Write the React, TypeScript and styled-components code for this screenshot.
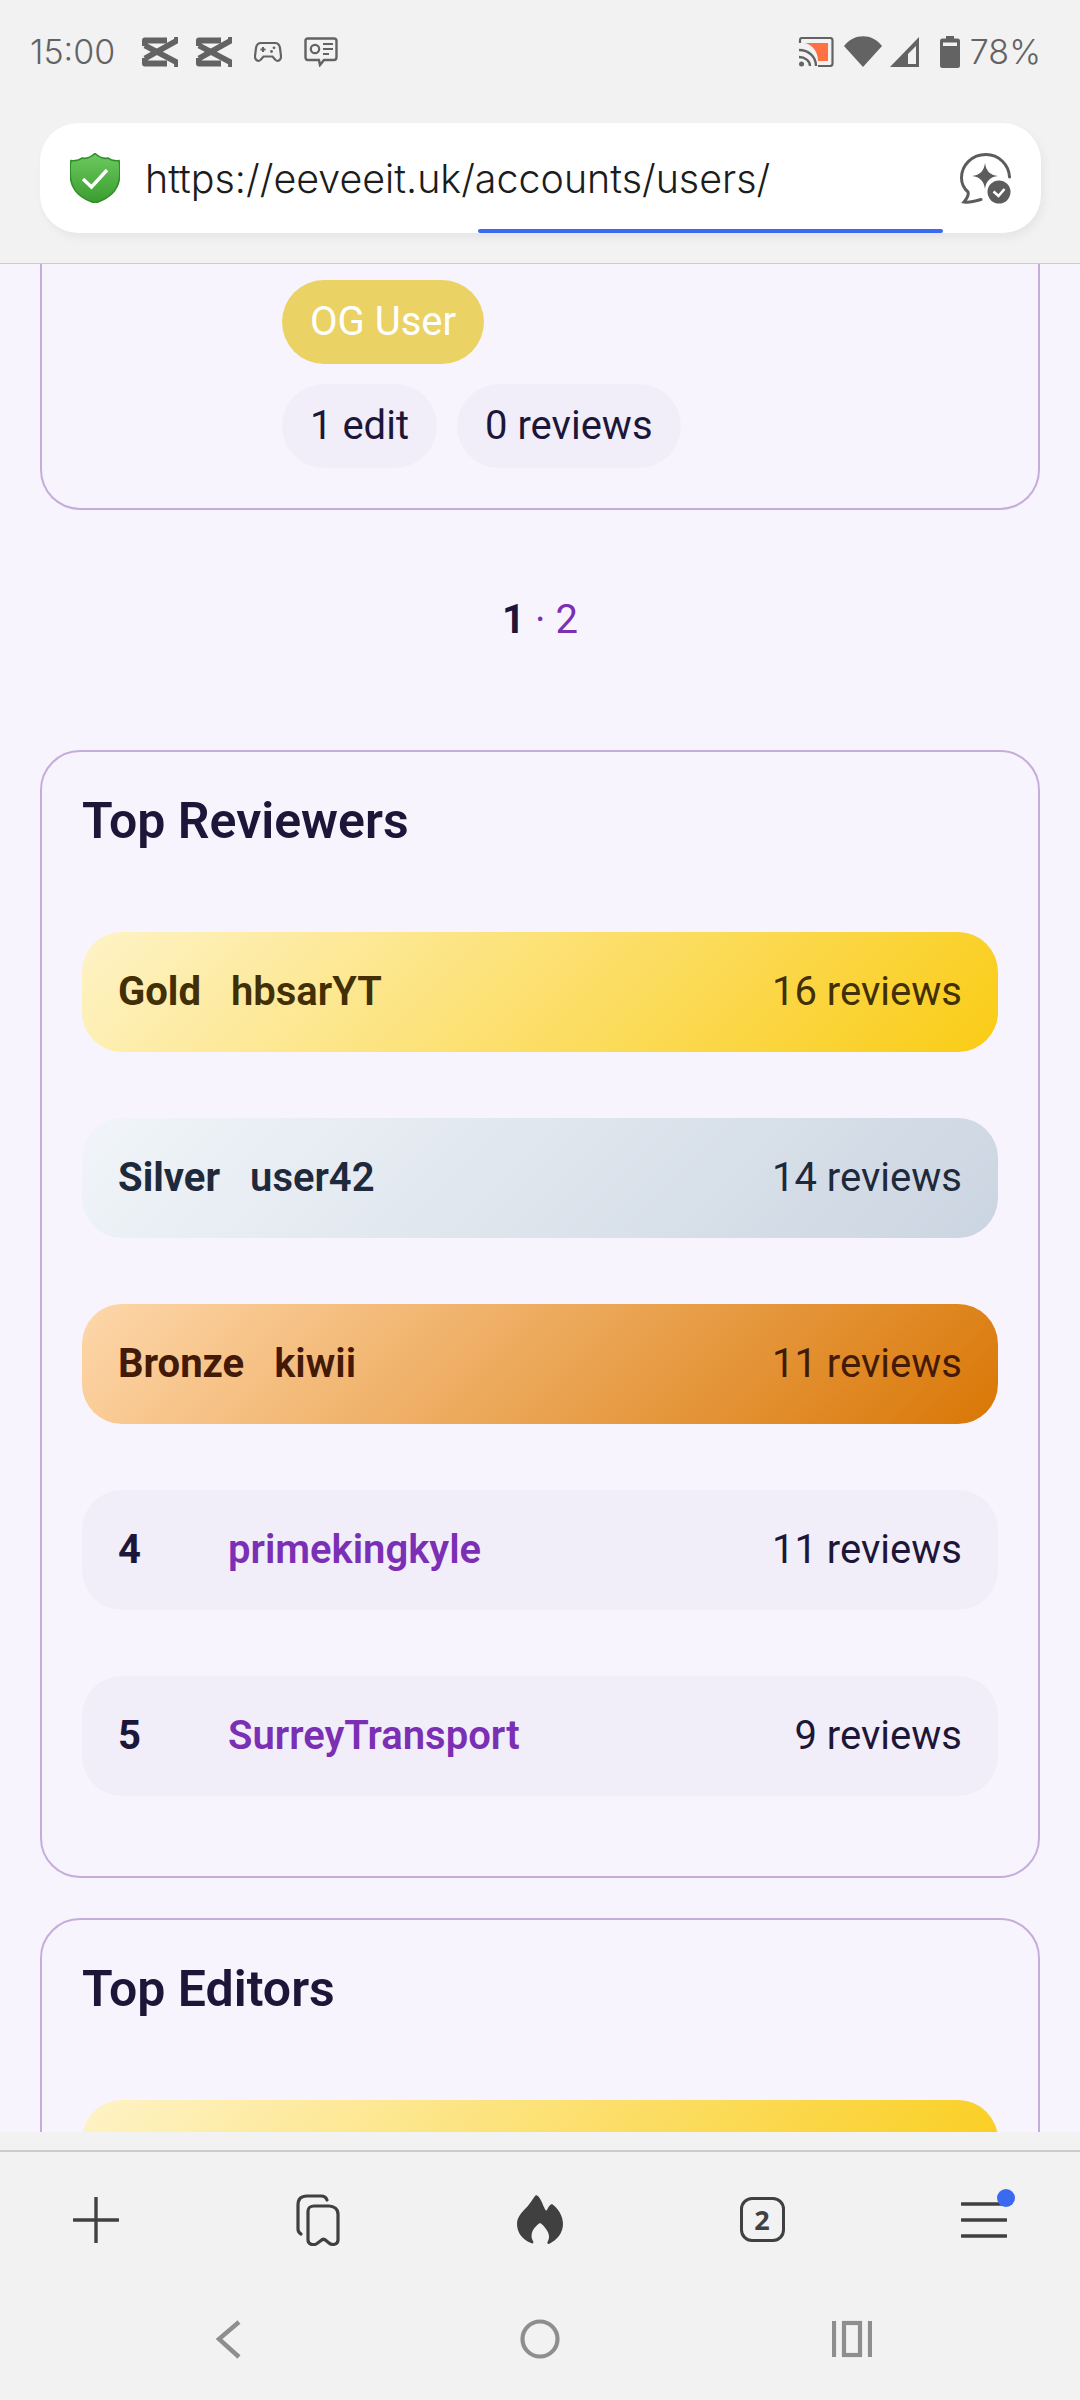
import React from 'react';
import styled, { createGlobalStyle } from 'styled-components';

const GlobalStyle = createGlobalStyle`
  html, body {
    margin: 0;
    padding: 0;
    background: #f2f2f2;
  }
  * {
    box-sizing: border-box;
  }
`;

type Tier = 'gold' | 'silver' | 'bronze' | 'plain';

const reviewers: { tier: Tier; label: string; name: string; count: string }[] = [
  { tier: 'gold', label: 'Gold', name: 'hbsarYT', count: '16 reviews' },
  { tier: 'silver', label: 'Silver', name: 'user42', count: '14 reviews' },
  { tier: 'bronze', label: 'Bronze', name: 'kiwii', count: '11 reviews' },
  { tier: 'plain', label: '4', name: 'primekingkyle', count: '11 reviews' },
  { tier: 'plain', label: '5', name: 'SurreyTransport', count: '9 reviews' },
];

const tierBackground: Record<Tier, string> = {
  gold: 'linear-gradient(135deg, #fef3c7, #facc15)',
  silver: 'linear-gradient(135deg, #f1f5f9, #cbd5e1)',
  bronze: 'linear-gradient(135deg, #fed7aa, #d97706)',
  plain: '#f1eef9',
};

const tierColor: Record<Tier, string> = {
  gold: '#422f06',
  silver: '#1e293b',
  bronze: '#431a07',
  plain: '#1e1638',
};

function CapcutIcon() {
  return (
    <svg width="36" height="30" viewBox="0 0 36 30" fill="none" stroke="#636363" strokeWidth="5.8" strokeLinejoin="round">
      <path d="M2.900 9 V3.500 H25" />
      <path d="M2.900 21 V26.500 H25" />
      <path d="M2.900 8.500 L35 25.500 V30" />
      <path d="M2.900 21.500 L35 3.500 V0" />
    </svg>
  );
}

function StatusLeftIcons() {
  return (
    <LeftIcons>
      <CapcutIcon />
      <CapcutIcon />
      <GameSlot>
        <svg width="28" height="22" viewBox="0 0 28 22" fill="none">
          <path
            d="M7 2 H21 C24 2 25.500 4 26 7 L27 15 C27.300 19 24 21 21.500 19 L18.500 15.500 H9.500 L6.500 19 C4 21 0.700 19 1 15 L2 7 C2.500 4 4 2 7 2 Z"
            stroke="#636363"
            strokeWidth="2.200"
          />
          <path d="M6.500 8.500 H11.500 M9 6 V11" stroke="#636363" strokeWidth="2" />
          <circle cx="20" cy="6.800" r="1.400" fill="#636363" />
          <circle cx="17.500" cy="10.500" r="1.400" fill="#636363" />
        </svg>
      </GameSlot>
      <MessageSlot>
        <svg width="34" height="30" viewBox="0 0 34 30" fill="none">
          <path
            d="M4 1.500 H30 Q32.500 1.500 32.500 4 V20 Q32.500 23 30 23 H20 L16 28 L15 23 H4 Q1.500 23 1.500 20 V4 Q1.500 1.500 4 1.500 Z"
            stroke="#636363"
            strokeWidth="2.400"
          />
          <circle cx="11" cy="12" r="4.200" stroke="#636363" strokeWidth="2.200" />
          <path d="M19 7 H29 M19 12 H29 M19 17 H25" stroke="#636363" strokeWidth="2.200" />
        </svg>
      </MessageSlot>
    </LeftIcons>
  );
}

function StatusRightIcons() {
  return (
    <RightIcons>
      <svg width="36" height="30" viewBox="0 0 36 30" fill="none">
        <path d="M2 6 V3 Q2 1 4 1 H32 Q34.500 1 34.500 3.500 V26.500 Q34.500 29 32 29 H20" stroke="#636363" strokeWidth="2.200" />
        <path d="M7 6 H30 V24 H20 C20 15 15 8 7 6 Z" fill="#ff7043" />
        <path d="M1 13 C11 13 18 20 18 29 M1 20 C7 20 12 24 12 29" stroke="#636363" strokeWidth="2.400" />
        <circle cx="3.500" cy="27" r="2.500" fill="#636363" />
      </svg>
      <svg width="38" height="31" viewBox="0 0 38 31">
        <path d="M0 10 C10 -3 28 -3 38 10 L19 31 Z" fill="#636363" />
      </svg>
      <SignalSlot>
        <svg width="30" height="30" viewBox="0 0 30 30">
          <path d="M29 0 V30 H0 Z M26 9 L18 17 V27 H26 Z" fill="#636363" fillRule="evenodd" />
        </svg>
      </SignalSlot>
      <BatterySlot>
        <svg width="20" height="32" viewBox="0 0 20 32">
          <path
            d="M6 0 H14 V2.500 H17.500 Q20 2.500 20 5 V29.500 Q20 32 17.500 32 H2.500 Q0 32 0 29.500 V5 Q0 2.500 2.500 2.500 H6 Z M3 6.500 V10 H17 V6.500 Z"
            fill="#636363"
            fillRule="evenodd"
          />
        </svg>
      </BatterySlot>
    </RightIcons>
  );
}

function ShieldIcon() {
  return (
    <svg width="50" height="50" viewBox="0 0 50 50">
      <defs>
        <linearGradient id="shieldFill" x1="0" y1="0" x2="0" y2="1">
          <stop offset="0" stopColor="#6cc95f" />
          <stop offset="1" stopColor="#3a9c2f" />
        </linearGradient>
      </defs>
      <path
        d="M25 0.500 C29 4 33 6.500 38 5 C41 7.500 45 8 49 7.500 C50 10 50 20 49.500 25 C48 38 38 46 25 50 C12 46 2 38 0.500 25 C0 20 0 10 1 7.500 C5 8 9 7.500 12 5 C17 6.500 21 4 25 0.500 Z"
        fill="url(#shieldFill)"
        stroke="#2f8f27"
        strokeWidth="1.600"
      />
      <path d="M13 26 L21.500 34 L37 17" fill="none" stroke="#fff" strokeWidth="3.400" />
    </svg>
  );
}

function AssistantIcon() {
  return (
    <svg width="51" height="51" viewBox="0 0 51 51" fill="none">
      <path
        d="M49.500 24 C49 12 39 1.500 26 1.500 C12 1.500 1.500 12 1.500 25 C1.500 31 4 35.500 8 39 C9 42 6.500 46 4 49 C10 50 16 48 21 46.500"
        stroke="#5c5c5c"
        strokeWidth="3"
        strokeLinecap="round"
      />
      <path
        d="M25 10 C26 18 30 22 38 23 C30 24 26 28 25 36 C24 28 20 24 12 23 C20 22 24 18 25 10 Z"
        fill="#5c5c5c"
      />
      <circle cx="39" cy="39" r="11.500" fill="#5c5c5c" />
      <path d="M33.500 38.500 L38.500 43 L44.500 36" stroke="#fff" strokeWidth="2.600" />
    </svg>
  );
}

function ReviewRow({ tier, label, name, count }: { tier: Tier; label: string; name: string; count: string }) {
  const plain = tier === 'plain';
  return (
    <Row $tier={tier}>
      <RowLabel>{label}</RowLabel>
      {plain ? <RowLink>{name}</RowLink> : <RowName>{name}</RowName>}
      <RowCount>{count}</RowCount>
    </Row>
  );
}

function App() {
  return (
    <Screen>
      <GlobalStyle />
      <TopChrome>
        <StatusBar>
          <StatusGroup>
            <StatusText>15:00</StatusText>
            <StatusLeftIcons />
          </StatusGroup>
          <StatusGroup>
            <StatusRightIcons />
            <StatusText>78%</StatusText>
          </StatusGroup>
        </StatusBar>
        <UrlBar>
          <ShieldIcon />
          <UrlText>https://eeveeit.uk/accounts/users/</UrlText>
          <AssistantIcon />
          <LoadBar />
        </UrlBar>
      </TopChrome>

      <Content>
        <ClippedCard>
          <OgPill>OG User</OgPill>
          <PillRow>
            <StatPill>1 edit</StatPill>
            <StatPill>0 reviews</StatPill>
          </PillRow>
        </ClippedCard>

        <Pagination>
          <CurrentPage>1</CurrentPage>
          <PageDot>·</PageDot>
          <PageLink>2</PageLink>
        </Pagination>

        <Card>
          <CardTitle>Top Reviewers</CardTitle>
          <RowList>
            {reviewers.map((r) => (
              <ReviewRow key={r.name} {...r} />
            ))}
          </RowList>
        </Card>

        <NextCard>
          <CardTitle>Top Editors</CardTitle>
          <RowList>
            <Row $tier="gold" />
          </RowList>
        </NextCard>
      </Content>

      <BottomChrome>
        <Toolbar>
          <ToolButton>
            <svg width="46" height="46" viewBox="0 0 46 46" fill="none">
              <path d="M1 23 H45 M23 1 V45" stroke="#404040" strokeWidth="3.400" strokeLinecap="round" />
            </svg>
          </ToolButton>
          <ToolButton>
            <svg width="44" height="52" viewBox="0 0 44 52" fill="none" stroke="#404040" strokeWidth="3.200" strokeLinecap="round" strokeLinejoin="round">
              <path d="M31 6 C30 3 28 2 25 2 H11 C5 2 2 5 2 11 V35 C2 38 3 39 5 40" />
              <path d="M12 17 C12 14 15 12 18 12 H33 C38 12 42 15 42 20 V46 C42 51 36 51.500 33 49 L30 46.500 C28.500 45 26.500 45 25 46.500 L21 49.500 C18 51.500 12 51 12 46 Z" />
            </svg>
          </ToolButton>
          <ToolButton>
            <svg width="46" height="50" viewBox="0 0 46 50">
              <path
                d="M19 0 C23 1 25 8 27 12 C28 15 29 16 30 15 C31 13 32 10 35 9 C41 13 46 21 46 29 C46 38 40 45 32 49 C30 49 30 47 31 46 C33 42 32 38 29 34 C27 31 25 29 23 28 C21 29 18 32 16 35 C14 39 14 43 16 46 C17 48 16 49 14 48 C6 45 0 38 0 29 C0 22 5 17 9 13 C13 9 16 3 19 0 Z"
                fill="#404040"
              />
            </svg>
          </ToolButton>
          <ToolButton>
            <TabCount>2</TabCount>
          </ToolButton>
          <ToolButton>
            <svg width="46" height="46" viewBox="0 0 46 46" fill="none">
              <path d="M1 7 H45 M1 23 H45 M1 39 H45" stroke="#404040" strokeWidth="3.400" strokeLinecap="round" />
            </svg>
            <MenuDot />
          </ToolButton>
        </Toolbar>
        <NavBar>
          <svg width="40" height="40" viewBox="0 0 40 40" fill="none">
            <path d="M31 3 L11 20 L31 38" stroke="#8e8e8e" strokeWidth="4.400" />
          </svg>
          <svg width="40" height="40" viewBox="0 0 40 40" fill="none">
            <circle cx="20" cy="20" r="17.500" stroke="#8e8e8e" strokeWidth="4.200" />
          </svg>
          <svg width="40" height="40" viewBox="0 0 40 40" fill="none">
            <path d="M2 2 V38 M38 2 V38" stroke="#8e8e8e" strokeWidth="4.200" />
            <rect x="12" y="4" width="16" height="32" stroke="#8e8e8e" strokeWidth="4.200" />
          </svg>
        </NavBar>
      </BottomChrome>
    </Screen>
  );
}

const Screen = styled.div`
  width: 1080px;
  height: 2400px;
  display: flex;
  flex-direction: column;
  overflow: hidden;
  background: #f7f4fe;
  font-family: Roboto, sans-serif;
`;

const TopChrome = styled.div`
  height: 264px;
  flex: none;
  background: #f2f2f2;
  border-bottom: 1px solid #cfc8d6;
  padding: 0 39px 0 40px;
`;

const StatusBar = styled.div`
  height: 123px;
  margin: 0 0 0 -10px;
  padding-bottom: 20px;
  display: flex;
  align-items: center;
  justify-content: space-between;
`;

const StatusGroup = styled.div`
  display: flex;
  align-items: center;
  gap: 10px;
`;

const StatusText = styled.span`
  font-family: Inter, sans-serif;
  font-weight: 300;
  font-size: 34px;
  color: #636363;
`;

const LeftIcons = styled.div`
  display: flex;
  align-items: center;
  gap: 18px;
  margin-left: 17px;
`;

const RightIcons = styled.div`
  display: flex;
  align-items: center;
  gap: 10px;
`;

const GameSlot = styled.span`
  display: flex;
  margin-left: 4px;
`;

const MessageSlot = styled.span`
  display: flex;
  margin-left: 4px;
`;

const SignalSlot = styled.span`
  display: flex;
  margin-left: -2px;
`;

const BatterySlot = styled.span`
  display: flex;
  margin-left: 10px;
`;

const UrlBar = styled.div`
  position: relative;
  height: 110px;
  display: flex;
  align-items: center;
  padding: 0 30px;
  gap: 25px;
  background: #fff;
  border-radius: 38px;
  box-shadow: 3px 5px 10px rgba(0, 0, 0, 0.05);
`;

const UrlText = styled.div`
  flex: 1;
  padding-top: 2px;
  font-family: Inter, sans-serif;
  font-weight: 300;
  font-size: 39.400px;
  color: #1c1c1c;
  white-space: nowrap;
`;

const LoadBar = styled.div`
  position: absolute;
  left: 438px;
  bottom: 0;
  width: 465px;
  height: 4px;
  background: #3a6af0;
  border-radius: 2px;
`;

const Content = styled.div`
  flex: 1;
  min-height: 0;
  overflow: hidden;
  padding: 0 40px;
`;

const ClippedCard = styled.section`
  border: 2px solid #c6add9;
  border-top: none;
  border-radius: 0 0 40px 40px;
  padding: 16px 0 40px 240px;
  display: flex;
  flex-direction: column;
  align-items: flex-start;
  gap: 20px;
`;

const OgPill = styled.span`
  height: 84px;
  padding: 0 28px 2px;
  display: flex;
  align-items: center;
  border-radius: 42px;
  background: #ebd264;
  color: #fff;
  font-size: 40px;
`;

const PillRow = styled.div`
  display: flex;
  gap: 20px;
`;

const StatPill = styled.span`
  height: 84px;
  padding: 0 28px 2px;
  display: flex;
  align-items: center;
  border-radius: 42px;
  background: #f1eef9;
  color: #1e1638;
  font-size: 40px;
`;

const Pagination = styled.div`
  height: 240px;
  padding-bottom: 22px;
  display: flex;
  align-items: center;
  justify-content: center;
  gap: 10px;
  font-size: 40px;
`;

const CurrentPage = styled.strong`
  color: #1e1638;
  font-weight: 700;
`;

const PageDot = styled.span`
  color: #7b2fb5;
`;

const PageLink = styled.span`
  color: #7b2fb5;
`;

const Card = styled.section`
  border: 2px solid #c6add9;
  border-radius: 40px;
  padding: 39px 40px 80px;
`;

const NextCard = styled(Card)`
  margin-top: 40px;
`;

const CardTitle = styled.h2`
  margin: 0 0 81px;
  height: 60px;
  line-height: 60px;
  font-size: 50px;
  font-weight: 600;
  color: #1e1638;
`;

const RowList = styled.div`
  display: flex;
  flex-direction: column;
  gap: 66px;
`;

const Row = styled.div<{ $tier: Tier }>`
  height: 120px;
  flex: none;
  display: flex;
  align-items: center;
  gap: 30px;
  padding: 0 36px 2px;
  border-radius: 40px;
  background: ${(p) => tierBackground[p.$tier]};
  color: ${(p) => tierColor[p.$tier]};
  font-size: 40px;
`;

const RowLabel = styled.span`
  min-width: 80px;
  font-weight: 700;
`;

const RowName = styled.span`
  flex: 1;
  font-weight: 600;
`;

const RowLink = styled.span`
  flex: 1;
  font-weight: 600;
  color: #7b2fb5;
`;

const RowCount = styled.span`
  font-weight: 400;
`;

const BottomChrome = styled.div`
  height: 268px;
  flex: none;
  background: #f2f2f2;
  padding-top: 18px;
`;

const Toolbar = styled.div`
  height: 137px;
  border-top: 2px solid #cccccc;
  padding: 0 66px;
  display: flex;
  align-items: center;
  justify-content: space-between;
`;

const ToolButton = styled.div`
  position: relative;
  width: 60px;
  height: 60px;
  display: flex;
  align-items: center;
  justify-content: center;
`;

const TabCount = styled.span`
  width: 45px;
  height: 45px;
  border: 3.500px solid #404040;
  border-radius: 12px;
  display: flex;
  align-items: center;
  justify-content: center;
  font-family: "Open Sans", sans-serif;
  font-weight: 700;
  font-size: 27px;
  color: #404040;
`;

const MenuDot = styled.span`
  position: absolute;
  top: -1px;
  right: -1px;
  width: 18px;
  height: 18px;
  border-radius: 50%;
  background: #3a6af0;
`;

const NavBar = styled.div`
  height: 113px;
  padding: 0 208px 10px;
  display: flex;
  align-items: center;
  justify-content: space-between;
`;

export default App;
